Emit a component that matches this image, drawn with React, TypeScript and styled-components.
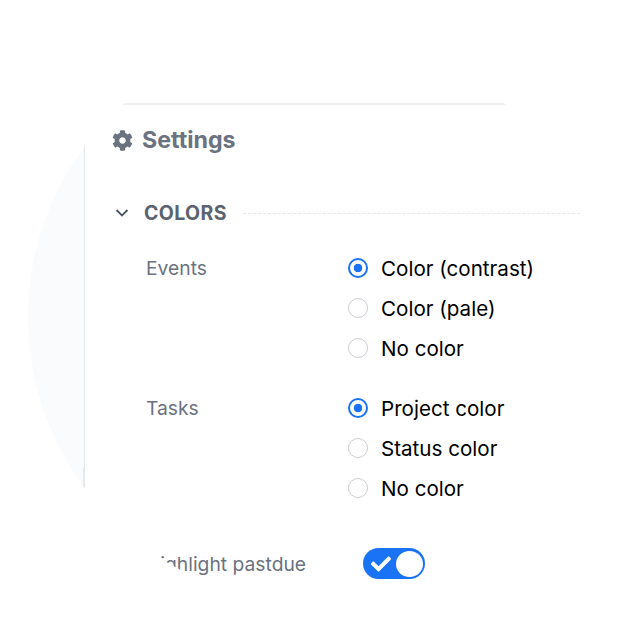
import React from 'react';
import styled, { createGlobalStyle } from 'styled-components';
import { FaCog, FaCheck } from 'react-icons/fa';

const GlobalStyle = createGlobalStyle`
  html, body {
    margin: 0;
    padding: 0;
    background: #fff;
  }
  body {
    font-family: Inter, "Liberation Sans", sans-serif;
  }
`;

type Option = { label: string; checked?: boolean };

const groups: { title: string; options: Option[] }[] = [
  {
    title: 'Events',
    options: [{ label: 'Color (contrast)', checked: true }, { label: 'Color (pale)' }, { label: 'No color' }],
  },
  {
    title: 'Tasks',
    options: [{ label: 'Project color', checked: true }, { label: 'Status color' }, { label: 'No color' }],
  },
];

export default function App() {
  return (
    <Page>
      <GlobalStyle />
      <Circle>
        <TopBar />
        <Body>
          <Sidebar />
          <Content>
            <Title>
              <FaCog size={21} color="#6b7280" />
              <span>Settings</span>
            </Title>
            <SectionHeader>
              <Chevron viewBox="0 0 14 14">
                <path d="M1.5 4L7 9.5L12.5 4" />
              </Chevron>
              <SectionName>COLORS</SectionName>
              <Dashes />
            </SectionHeader>
            {groups.map((group) => (
              <Group key={group.title}>
                <GroupLabel>{group.title}</GroupLabel>
                <Options>
                  {group.options.map((option) => (
                    <Row key={option.label}>
                      <Radio $checked={option.checked} />
                      <span>{option.label}</span>
                    </Row>
                  ))}
                </Options>
              </Group>
            ))}
            <ToggleRow>
              <GroupLabel>Highlight pastdue</GroupLabel>
              <Toggle>
                <FaCheck size={20} color="#fff" />
                <Knob />
              </Toggle>
            </ToggleRow>
          </Content>
        </Body>
      </Circle>
    </Page>
  );
}

const Page = styled.div`
  width: 627px;
  height: 627px;
  padding: 31px 0 0 28px;
  box-sizing: border-box;
  overflow: hidden;
`;

const Circle = styled.div`
  width: 572px;
  height: 572px;
  border-radius: 50%;
  overflow: hidden;
  background: #fff;
  display: flex;
  flex-direction: column;
`;

const TopBar = styled.div`
  flex: none;
  height: 72px;
  border-bottom: 2px solid #eef0f3;
`;

const Body = styled.div`
  flex: 1;
  display: flex;
  min-height: 0;
`;

const Sidebar = styled.div`
  flex: none;
  position: relative;
  width: 57px;
  box-sizing: border-box;
  background: #fafbfc;
  border-right: 1px solid #e5e7eb;

  &::after {
    content: '';
    position: absolute;
    top: 363px;
    right: 0;
    width: 1px;
    height: 22px;
    background: #e9eaee;
  }
`;

const Content = styled.div`
  flex: 1;
  min-width: 0;
  padding: 21px 0 0 0;
`;

const Title = styled.h1`
  margin: 0 0 0 27px;
  height: 28px;
  display: flex;
  align-items: center;
  gap: 9px;
  font-size: 23.2px;
  line-height: 28px;
  font-weight: 700;
  color: #6b7280;
`;

const SectionHeader = styled.div`
  margin: 45px 0 0 30px;
  height: 28px;
  display: flex;
  align-items: center;
`;

const Chevron = styled.svg`
  width: 14px;
  height: 14px;
  fill: none;
  stroke: #4b5563;
  stroke-width: 1.8;
  flex: none;
`;

const SectionName = styled.span`
  margin-left: 15px;
  font-size: 19.5px;
  font-weight: 700;
  letter-spacing: 0.4px;
  color: #5b6270;
`;

const Dashes = styled.div`
  flex: 1;
  margin-left: 16px;
  border-top: 1px dashed #e5e7eb;
`;

const Group = styled.div`
  display: flex;
  margin: 31px 0 0 61px;
  & + & {
    margin-top: 40px;
  }
`;

const GroupLabel = styled.div`
  width: 202px;
  flex: none;
  font-size: 19.3px;
  line-height: 20px;
  color: #6b7280;
`;

const Options = styled.div`
  display: flex;
  flex-direction: column;
  gap: 20px;
`;

const Row = styled.div`
  display: flex;
  align-items: center;
  gap: 13px;
  height: 20px;
  font-size: 20.6px;
  color: #000;
  white-space: nowrap;
`;

const Radio = styled.span<{ $checked?: boolean }>`
  width: 20px;
  height: 20px;
  box-sizing: border-box;
  border-radius: 50%;
  flex: none;
  border: ${(p) => (p.$checked ? '2px solid #1a73f5' : '1.5px solid #c9ccd2')};
  background: ${(p) => (p.$checked ? 'radial-gradient(circle, #1a73f5 0 4px, #fff 4.6px)' : '#fff')};
`;

const ToggleRow = styled.div`
  display: flex;
  align-items: center;
  margin: 50px 0 0 61px;
  height: 31px;
`;

const Toggle = styled.div`
  width: 62px;
  height: 31px;
  margin-left: 15px;
  box-sizing: border-box;
  padding: 0 2px 0 8px;
  border-radius: 16px;
  background: #1a73f5;
  display: flex;
  align-items: center;
  justify-content: space-between;
`;

const Knob = styled.span`
  width: 27px;
  height: 26px;
  border-radius: 50%;
  background: #fff;
`;
